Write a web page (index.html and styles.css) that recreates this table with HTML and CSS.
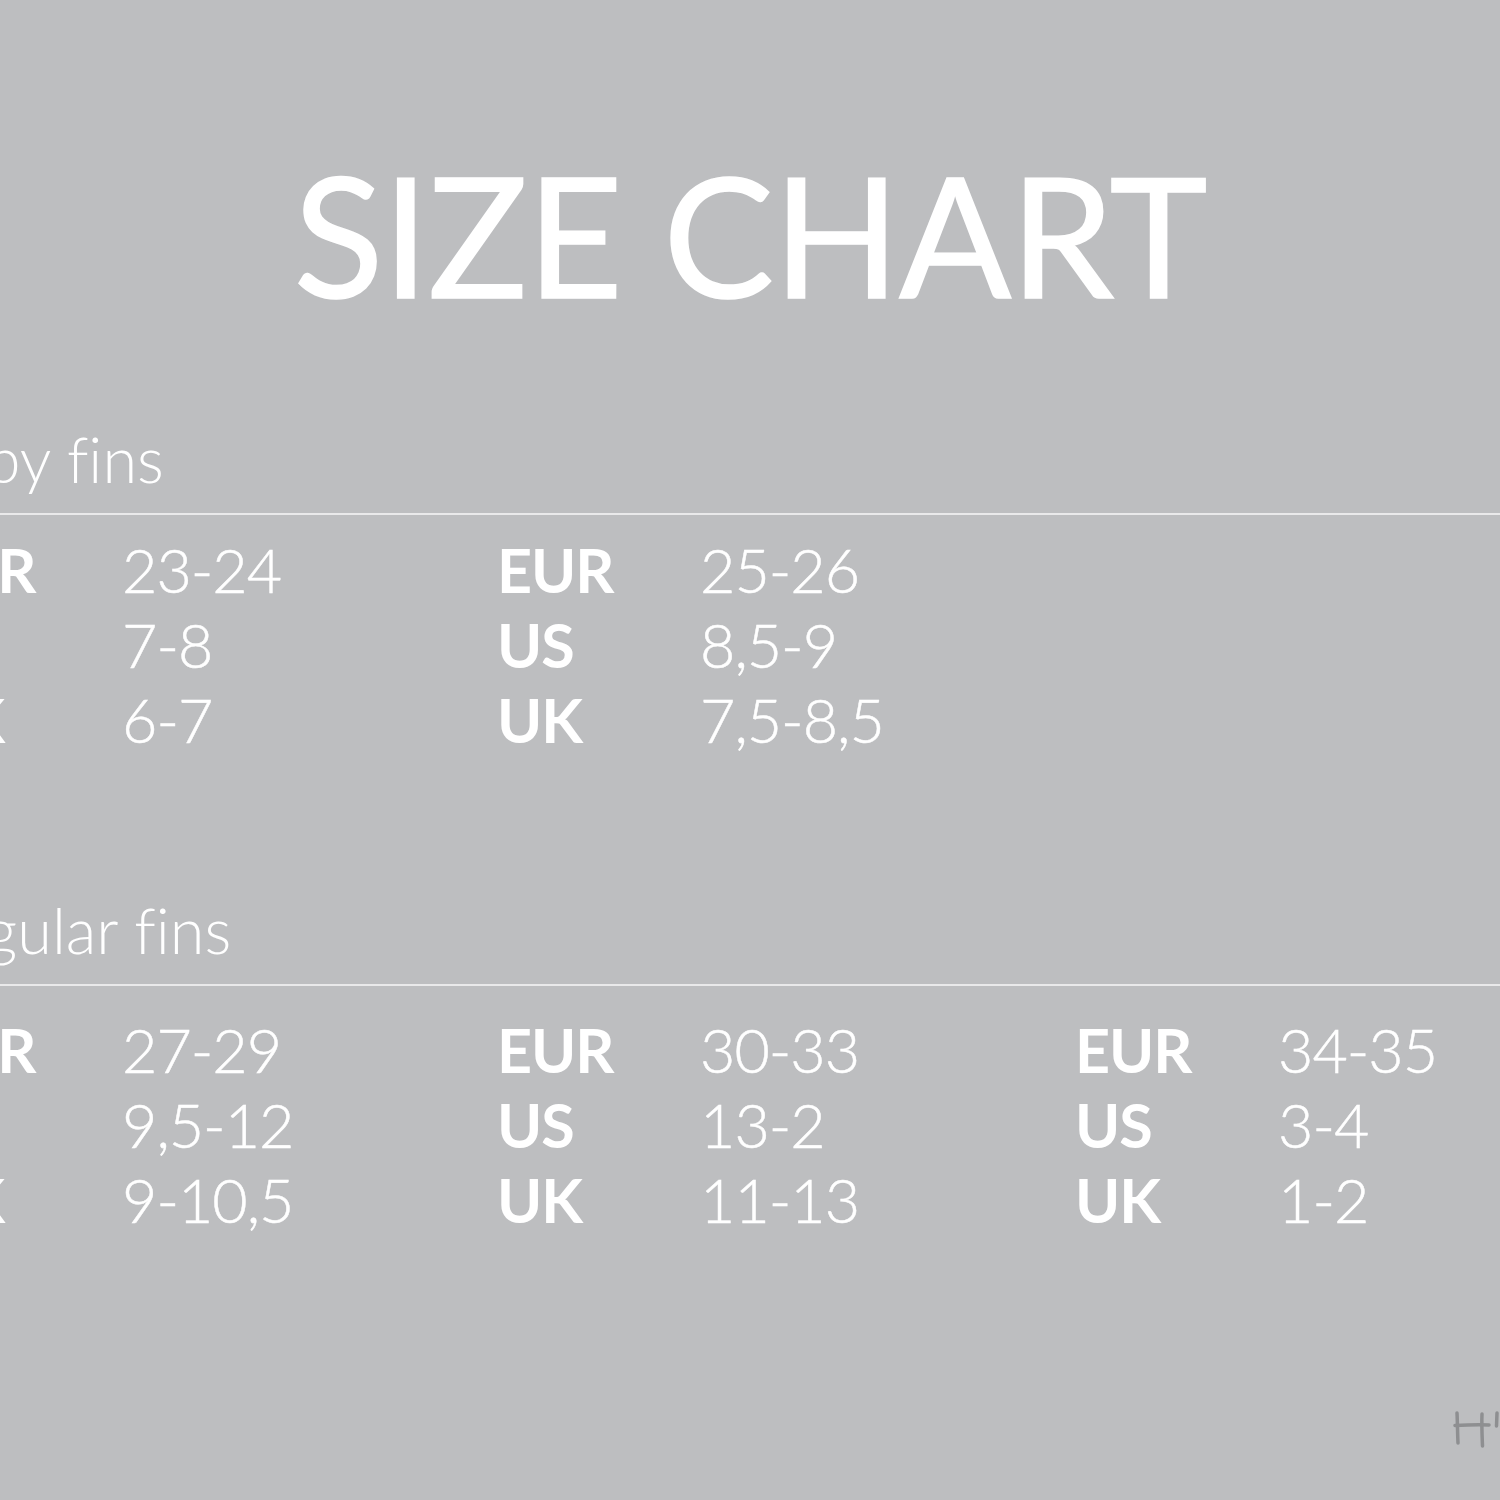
FILE: index.html
```html
<!DOCTYPE html>
<html lang="en">
<head>
<meta charset="utf-8">
<title>Size chart</title>
<link rel="stylesheet" href="styles.css">
</head>
<body>
<main class="page">
  <h1 class="title">SIZE CHART</h1>

  <section class="group group-baby">
    <h2 class="group-title">Baby fins</h2>
    <div class="rule"></div>
    <div class="table">
      <div class="col">
        <div class="row"><span class="label">EUR</span><span class="value">23-24</span></div>
        <div class="row"><span class="label">US</span><span class="value">7-8</span></div>
        <div class="row"><span class="label">UK</span><span class="value">6-7</span></div>
      </div>
      <div class="col">
        <div class="row"><span class="label">EUR</span><span class="value">25-26</span></div>
        <div class="row"><span class="label">US</span><span class="value">8,5-9</span></div>
        <div class="row"><span class="label">UK</span><span class="value">7,5-8,5</span></div>
      </div>
    </div>
  </section>

  <section class="group group-regular">
    <h2 class="group-title">Regular fins</h2>
    <div class="rule"></div>
    <div class="table">
      <div class="col">
        <div class="row"><span class="label">EUR</span><span class="value">27-29</span></div>
        <div class="row"><span class="label">US</span><span class="value">9,5-12</span></div>
        <div class="row"><span class="label">UK</span><span class="value">9-10,5</span></div>
      </div>
      <div class="col">
        <div class="row"><span class="label">EUR</span><span class="value">30-33</span></div>
        <div class="row"><span class="label">US</span><span class="value">13-2</span></div>
        <div class="row"><span class="label">UK</span><span class="value">11-13</span></div>
      </div>
      <div class="col">
        <div class="row"><span class="label">EUR</span><span class="value">34-35</span></div>
        <div class="row"><span class="label">US</span><span class="value">3-4</span></div>
        <div class="row"><span class="label">UK</span><span class="value">1-2</span></div>
      </div>
    </div>
  </section>

  <svg class="logo" width="60" height="44" viewBox="0 0 60 44" aria-hidden="true">
    <path d="M6 7 C6.5 17 6.5 27 7 37" />
    <path d="M4 19.5 C14 19 24 18.5 38 19" />
    <path d="M31 8 C30.5 18 31 28 31.5 40" />
    <path d="M46 7 L45.5 20" />
  </svg>
</main>
</body>
</html>
```

FILE: styles.css
```css
html, body {
  margin: 0;
  padding: 0;
}

body {
  background: #bdbec0;
  color: #ffffff;
  font-family: "Lato", "Open Sans", sans-serif;
  font-variant-ligatures: none;
  font-feature-settings: "liga" 0, "clig" 0;
  width: 1500px;
  height: 1500px;
  overflow: hidden;
}

.page {
  position: relative;
  width: 1500px;
  height: 1500px;
  overflow: hidden;
  padding-top: 151px;
  box-sizing: border-box;
}

.title {
  margin: 0;
  text-align: center;
  font-size: 166px;
  line-height: 166px;
  font-weight: 400;
  letter-spacing: -1px;
  -webkit-text-stroke: 1.5px #ffffff;
}

.group-title {
  margin: 0 0 0 -84px;
  font-size: 63px;
  line-height: 60px;
  font-weight: 300;
}

.group-baby {
  margin-top: 112px;
}

.group-regular {
  margin-top: 143px;
}

.rule {
  height: 2px;
  background: #e9e9ea;
  margin-top: 24px;
}

.table {
  display: grid;
  grid-template-columns: repeat(3, 578px);
  margin-left: -81px;
  margin-top: 17px;
}

.group-regular .table {
  margin-top: 26px;
}

.row {
  display: grid;
  grid-template-columns: 203px auto;
  font-size: 61px;
  line-height: 75px;
}

.label {
  font-weight: 700;
  letter-spacing: -1px;
}

.value {
  font-weight: 300;
  letter-spacing: -1px;
  -webkit-text-stroke: 0.5px #ffffff;
}

.logo {
  position: absolute;
  right: -11px;
  top: 1406px;
  fill: none;
  stroke: #8e8f91;
  stroke-width: 3.5;
  stroke-linecap: round;
}
```
